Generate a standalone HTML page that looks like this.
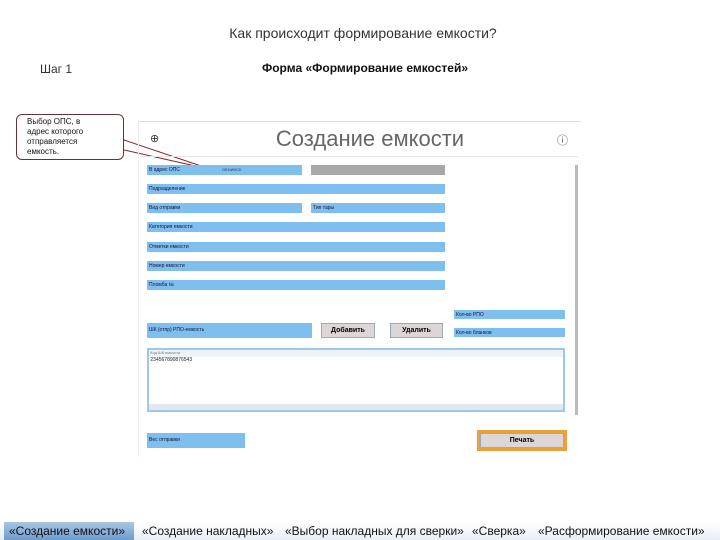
<!DOCTYPE html>
<html><head><meta charset="utf-8"><style>
body{margin:0;width:720px;height:540px;background:#fff;position:relative;overflow:hidden;font-family:"Liberation Sans",sans-serif}
.a{position:absolute}
.f{position:absolute;background:#7fbfef;height:10px;font-size:5px;color:#113;line-height:10px;padding-left:2px;box-sizing:border-box}
.v{position:absolute;font-size:4px;color:#335;line-height:10px}
.btn{position:absolute;background:#ddd6d6;border:1px solid #9aaabb;font-size:7px;font-weight:bold;text-align:center;line-height:13px;box-sizing:border-box}
.seg{position:absolute;top:522px;height:18px;font-size:12px;line-height:18px;white-space:nowrap;color:#111}
</style></head><body>
<div class="a" style="left:0;top:25px;width:726px;text-align:center;font-size:14px;color:#333">Как происходит формирование емкости?</div>
<div class="a" style="left:40px;top:62px;font-size:12px;color:#333">Шаг 1</div>
<div class="a" style="left:200px;top:61px;width:330px;text-align:center;font-size:12px;font-weight:bold;color:#111">Форма «Формирование емкостей»</div>
<div class="a" style="left:16px;top:114px;width:108px;height:46px;border:1px solid #633;border-radius:6px;font-size:8px;line-height:10px;padding:2px 24px 0 10px;box-sizing:border-box;color:#111">Выбор ОПС, в адрес которого отправляется емкость.</div>
<svg class="a" style="left:0;top:0" width="720" height="540"><line x1="124" y1="140" x2="213" y2="170" stroke="#822" stroke-width="1"/><line x1="124" y1="150" x2="213" y2="170" stroke="#822" stroke-width="1"/></svg>
<div class="a" style="left:138px;top:121px;width:442px;height:335px;border-top:1px solid #ddd;border-left:1px solid #eee"></div>
<div class="a" style="left:150px;top:132px;font-size:11px;color:#333">⊕</div>
<div class="a" style="left:557px;top:132px;font-size:11px;color:#555">ⓘ</div>
<div class="a" style="left:140px;top:126px;width:460px;text-align:center;font-size:22px;color:#666;font-weight:300">Создание емкости</div>
<div class="a" style="left:140px;top:156px;width:438px;height:1px;background:#e5e5e5"></div>
<div class="a" style="left:575px;top:165px;width:3px;height:250px;background:#bbb"></div>
<div class="f" style="left:147px;top:165px;width:155px">В адрес ОПС</div><div class="v" style="left:222px;top:165px">ОБНИНСК</div>
<div class="a" style="left:311px;top:165px;width:134px;height:10px;background:#a8a8a8"></div>
<div class="f" style="left:147px;top:184px;width:298px">Подразделение</div>
<div class="f" style="left:147px;top:203px;width:155px">Вид отправки</div>
<div class="f" style="left:311px;top:203px;width:134px">Тип тары</div>
<div class="f" style="left:147px;top:222px;width:298px">Категория емкости</div>
<div class="f" style="left:147px;top:242px;width:298px">Отметки емкости</div>
<div class="f" style="left:147px;top:261px;width:298px">Номер емкости</div>
<div class="f" style="left:147px;top:280px;width:298px">Пломба №</div>
<div class="f" style="left:454px;top:310px;width:111px;height:9px">Кол-во РПО</div>
<div class="f" style="left:454px;top:328px;width:111px;height:9px">Кол-во бланков</div>
<div class="f" style="left:147px;top:323px;width:165px;height:15px;line-height:15px">ШК (отпр) РПО-емкость</div>
<div class="btn" style="left:321px;top:323px;width:54px;height:15px">Добавить</div>
<div class="btn" style="left:390px;top:323px;width:53px;height:15px">Удалить</div>
<div class="a" style="left:147px;top:348px;width:418px;height:64px;border:2px solid #9cc8ee;box-sizing:border-box;background:#fff">
<div style="height:7px;background:#eef3f8;font-size:4px;color:#777">&nbsp;Код ШК емкости</div>
<div style="height:7px;font-size:5px;color:#222">&nbsp;234567890876543</div>
<div style="position:absolute;bottom:0;left:0;right:0;height:6px;background:#e3e8ee"></div></div>
<div class="f" style="left:147px;top:433px;width:98px;height:15px;line-height:15px">Вес отправки</div>
<div class="a" style="left:477px;top:430px;width:90px;height:21px;background:#e9a23b"></div>
<div class="btn" style="left:480px;top:433px;width:84px;height:15px">Печать</div>
<div class="a" style="left:0;top:522px;width:720px;height:18px;background:linear-gradient(#ffffff,#e6eef7)"></div>
<div class="a" style="left:4px;top:522px;width:130px;height:18px;background:linear-gradient(#a9c6e6,#6f9ccc)"></div>
<div class="seg" style="left:9px">«Создание емкости»</div>
<div class="seg" style="left:142px">«Создание накладных»</div>
<div class="seg" style="left:285px">«Выбор накладных для сверки»</div>
<div class="seg" style="left:472px">«Сверка»</div>
<div class="seg" style="left:538px">«Расформирование емкости»</div>
</body></html>
